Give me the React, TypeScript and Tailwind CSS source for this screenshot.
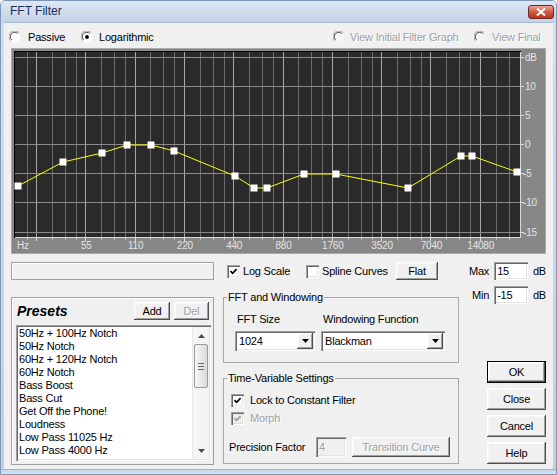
import React from "react";

const RAISED =
  "shadow-[inset_-1px_-1px_0_#505050,inset_1px_1px_0_#ffffff,inset_-2px_-2px_0_#a0a0a0,inset_2px_2px_0_#f8f8f8]";
const SUNKEN =
  "shadow-[inset_1px_1px_0_#a0a0a0,inset_2px_2px_0_#696969,inset_-1px_-1px_0_#ffffff,inset_-2px_-2px_0_#e3e3e3]";
const DIS = "text-[#a0a0a0] [text-shadow:1px_1px_0_#ffffff]";

const PRESETS = [
  "50Hz + 100Hz Notch",
  "50Hz Notch",
  "60Hz + 120Hz Notch",
  "60Hz Notch",
  "Bass Boost",
  "Bass Cut",
  "Get Off the Phone!",
  "Loudness",
  "Low Pass 11025 Hz",
  "Low Pass 4000 Hz",
  "Low Pass 5512 Hz",
];

const POINTS: [number, number][] = [
  [17, 186],
  [62, 162],
  [101, 153],
  [126, 145],
  [150, 145],
  [173, 151],
  [234, 176],
  [253, 188],
  [266, 188],
  [303, 174],
  [335, 174],
  [407, 188],
  [460, 156],
  [471, 156],
  [516, 172],
];

const DB: { y: number; label: string }[] = [
  { y: 57, label: "dB" },
  { y: 86, label: "10" },
  { y: 115, label: "5" },
  { y: 144, label: "0" },
  { y: 173, label: "-5" },
  { y: 202, label: "-10" },
  { y: 232, label: "-15" },
];

const xf = (f: number) => 35 + 49.3 * Math.log2(f / 27.5);

function Radio(props: { checked?: boolean; disabled?: boolean }) {
  return (
    <svg width="12" height="12" viewBox="0 0 12 12" className="shrink-0">
      <circle cx="6" cy="6" r="5.5" fill={props.disabled ? "#f4f4f4" : "#ffffff"} />
      <path d="M1.6 9.8 A5.3 5.3 0 0 1 9.8 1.6" fill="none" stroke="#9a9a9a" strokeWidth="1" />
      <path d="M2.6 8.9 A4.2 4.2 0 0 1 8.9 2.6" fill="none" stroke="#505050" strokeWidth="1" />
      {props.checked && <circle cx="6" cy="6" r="1.9" fill="#000000" />}
    </svg>
  );
}

function Check(props: { checked?: boolean; disabled?: boolean }) {
  return (
    <span
      className={`flex h-[13px] w-[13px] shrink-0 items-center justify-center ${
        props.disabled ? "bg-[#ececec]" : "bg-white"
      } ${SUNKEN}`}
    >
      {props.checked && (
        <svg width="9" height="9" viewBox="0 0 9 9">
          <path
            d="M1.5 4.2 L3.6 6.3 L7.6 2.2"
            fill="none"
            stroke={props.disabled ? "#a0a0a0" : "#000000"}
            strokeWidth="1.7"
          />
        </svg>
      )}
    </span>
  );
}

function Btn(props: {
  children: React.ReactNode;
  className?: string;
  disabled?: boolean;
  def?: boolean;
}) {
  return (
    <div
      className={`flex items-center justify-center bg-[#f0f0f0] ${RAISED} ${
        props.disabled ? DIS : "text-black"
      } ${props.def ? "border border-black" : ""} ${props.className ?? ""}`}
    >
      {props.children}
    </div>
  );
}

function Combo(props: { value: string; className?: string }) {
  return (
    <div className={`flex h-[20px] bg-white p-[2px] ${SUNKEN} ${props.className ?? ""}`}>
      <span className="flex flex-1 items-center pl-[2px]">{props.value}</span>
      <span className={`flex w-[16px] items-center justify-center bg-[#f0f0f0] ${RAISED}`}>
        <svg width="7" height="4" viewBox="0 0 7 4">
          <path d="M0 0 H7 L3.5 4 Z" fill="#000000" />
        </svg>
      </span>
    </div>
  );
}

function Graph() {
  const vlines: { x: number; major: boolean }[] = [];
  for (let k = -1; k <= 10; k++) {
    const b = 27.5 * 2 ** k;
    [1, 1.25, 1.5, 1.75].forEach((m, i) => {
      const x = xf(b * m);
      if (x > 15 && x < 518) vlines.push({ x: Math.round(x) + 0.5, major: i === 0 });
    });
  }
  const octaves = [55, 110, 220, 440, 880, 1760, 3520, 7040, 14080];
  const font = '"Liberation Sans", Arial, sans-serif';

  return (
    <svg width="535" height="206" viewBox="10 48 535 206" className="block">
      <rect x="10.5" y="48.5" width="534" height="205" fill="#878787" stroke="#a9a9a9" />
      <rect x="14" y="52" width="505" height="185" fill="#2a2a2a" />
      {vlines.map((v) => (
        <line
          key={v.x}
          x1={v.x}
          x2={v.x}
          y1="52"
          y2="237"
          stroke={v.major ? "#a8a8a8" : "#6c6c6c"}
        />
      ))}
      {DB.map((d) => (
        <line key={d.y} x1="14" x2="519" y1={d.y + 0.5} y2={d.y + 0.5} stroke="#8a8a8a" />
      ))}
      <line x1="13.5" x2="13.5" y1="51" y2="238" stroke="#000000" />
      <line x1="13" x2="520" y1="51.5" y2="51.5" stroke="#000000" />
      <line x1="519.5" x2="519.5" y1="52" y2="238" stroke="#d8d8d8" />
      <line x1="14" x2="520" y1="237.5" y2="237.5" stroke="#d8d8d8" />
      {vlines.map((v) => (
        <line
          key={"t" + v.x}
          x1={v.x}
          x2={v.x}
          y1="238"
          y2={v.major ? "241" : "239.5"}
          stroke="#d8d8d8"
        />
      ))}
      {DB.map((d) => (
        <line key={"d" + d.y} x1="520" x2="523" y1={d.y + 0.5} y2={d.y + 0.5} stroke="#d8d8d8" />
      ))}
      {DB.map((d) => (
        <text
          key={"l" + d.y}
          x={d.label.startsWith("-") ? 522 : 524}
          y={d.y + 4}
          fontSize="10"
          fontFamily={font}
          fill="#e4e4e4"
        >
          {d.label}
        </text>
      ))}
      <text x="16" y="249" fontSize="10" fontFamily={font} fill="#e4e4e4">
        Hz
      </text>
      {octaves.map((f) => (
        <text
          key={f}
          x={xf(f) + 1}
          y="249"
          fontSize="10"
          fontFamily={font}
          fill="#e4e4e4"
          textAnchor="middle"
        >
          {f}
        </text>
      ))}
      <polyline
        points={POINTS.map((p) => p.join(",")).join(" ")}
        fill="none"
        stroke="#ffff00"
        strokeWidth="1"
      />
      {POINTS.map((p, i) => (
        <rect key={i} x={p[0] - 3.5} y={p[1] - 3.5} width="7" height="7" fill="#ffffff" />
      ))}
    </svg>
  );
}

export default function App() {
  return (
    <div className="flex h-[475px] w-[557px] flex-col overflow-hidden rounded-t-[5px] border border-[#7f97b8] bg-[linear-gradient(#d3deec,#bfd0e5)] font-['Liberation_Sans',Arial,sans-serif] text-[11px] leading-[13px] tracking-[-0.2px] text-black">
      {/* title bar */}
      <div className="flex h-[21px] shrink-0 items-center bg-[linear-gradient(#dde7f3,#c3d3e7)] pl-[9px]">
        <span className="flex-1 text-[12px] tracking-normal text-[#1c2d58]">FFT Filter</span>
        <div className="mr-[2px] flex h-[14px] w-[26px] items-center justify-center rounded-[3px] border border-[#6d2a1e] bg-[linear-gradient(#eba696,#cf5a44_50%,#b8341f)]">
          <svg width="10" height="8" viewBox="0 0 10 8">
            <path d="M1 0.5 L9 7.5 M9 0.5 L1 7.5" stroke="#ffffff" strokeWidth="2" />
          </svg>
        </div>
      </div>

      {/* dialog body */}
      <div className="mx-[3px] flex h-[447px] shrink-0 flex-col border-t border-[#a9bbd2] bg-[#f0f0f0]">
        <div className="mt-[7px] flex h-[14px] items-center pl-[5px]">
          <div className="flex w-[72px] items-center">
            <Radio />
            <span className="ml-[7px]">Passive</span>
          </div>
          <div className="flex w-[252px] items-center">
            <Radio checked />
            <span className="ml-[6px]">Logarithmic</span>
          </div>
          <div className={`flex w-[141px] items-center ${DIS}`}>
            <Radio disabled />
            <span className="ml-[5px]">View Initial Filter Graph</span>
          </div>
          <div className={`flex items-center ${DIS}`}>
            <Radio disabled />
            <span className="ml-[6px]">View Final</span>
          </div>
        </div>

        <div className="ml-[7px] mt-[4px]">
          <Graph />
        </div>

        <div className="ml-[7px] mt-[8px] flex">
          {/* left column */}
          <div className="flex w-[203px] flex-col">
            <div className="h-[18px] border border-[#a0a0a0] shadow-[inset_1px_1px_0_#ffffff]" />
            <div className="mt-[17px] flex h-[168px] flex-col border border-[#a0a0a0] px-[4px] pt-[4px] shadow-[inset_1px_1px_0_#ffffff]">
              <div className="flex h-[18px] items-center">
                <span className="ml-[1px] flex-1 text-[14px] font-bold italic tracking-normal">Presets</span>
                <Btn className="h-[18px] w-[36px]">Add</Btn>
                <Btn className="ml-[4px] h-[18px] w-[35px]" disabled>
                  Del
                </Btn>
              </div>
              <div className={`mt-[5px] flex h-[136px] w-[195px] bg-white p-[2px] ${SUNKEN}`}>
                <div className="flex-1 overflow-hidden pl-[1px]">
                  {PRESETS.map((p) => (
                    <div key={p} className="h-[13px] whitespace-nowrap leading-[13px]">
                      {p}
                    </div>
                  ))}
                </div>
                <div className="flex w-[17px] flex-col border-l border-[#e8e8e8] bg-[#f5f5f5]">
                  <div className="flex h-[17px] items-center justify-center">
                    <svg width="7" height="4" viewBox="0 0 7 4">
                      <path d="M0 4 H7 L3.5 0 Z" fill="#4d4d4d" />
                    </svg>
                  </div>
                  <div className="mx-[1px] flex h-[44px] flex-col items-center justify-center gap-[2px] rounded-[2px] border border-[#9b9b9b] bg-[linear-gradient(90deg,#f6f6f6,#dadada)]">
                    <span className="h-[1px] w-[6px] bg-[#6b6b6b]" />
                    <span className="h-[1px] w-[6px] bg-[#6b6b6b]" />
                    <span className="h-[1px] w-[6px] bg-[#6b6b6b]" />
                  </div>
                  <div className="flex-1" />
                  <div className="flex h-[17px] items-center justify-center">
                    <svg width="7" height="4" viewBox="0 0 7 4">
                      <path d="M0 0 H7 L3.5 4 Z" fill="#4d4d4d" />
                    </svg>
                  </div>
                </div>
              </div>
            </div>
          </div>

          {/* middle column */}
          <div className="ml-[9px] flex w-[236px] flex-col">
            <div className="flex h-[18px] items-center">
              <div className="ml-[4px] flex w-[79px] items-center">
                <Check checked />
                <span className="ml-[3px]">Log Scale</span>
              </div>
              <div className="flex w-[90px] items-center">
                <Check />
                <span className="ml-[3px]">Spline Curves</span>
              </div>
              <Btn className="h-[18px] w-[42px]">Flat</Btn>
            </div>

            <fieldset className="mt-[11px] h-[72px] border border-[#a8a8a8]">
              <legend className="ml-[3px] px-[1px] leading-[13px]">FFT and Windowing</legend>
              <div className="mt-[9px] flex pl-[11px]">
                <div className="flex w-[80px] flex-col">
                  <span className="ml-[2px] h-[13px]">FFT Size</span>
                  <Combo value="1024" className="mt-[5px]" />
                </div>
                <div className="ml-[6px] flex w-[124px] flex-col">
                  <span className="ml-[2px] h-[13px]">Windowing Function</span>
                  <Combo value="Blackman" className="mt-[5px]" />
                </div>
              </div>
            </fieldset>

            <fieldset className="mt-[9px] h-[92px] border border-[#a8a8a8]">
              <legend className="ml-[3px] px-[1px] leading-[13px]">Time-Variable Settings</legend>
              <div className="mt-[8px] flex h-[14px] items-center pl-[7px]">
                <Check checked />
                <span className="ml-[6px]">Lock to Constant Filter</span>
              </div>
              <div className="mt-[4px] flex h-[14px] items-center pl-[7px]">
                <Check checked disabled />
                <span className={`ml-[6px] ${DIS}`}>Morph</span>
              </div>
              <div className="mt-[12px] flex h-[20px] items-center pl-[5px]">
                <span className="w-[87px]">Precision Factor</span>
                <div className={`flex h-[20px] w-[30px] items-center bg-[#f0f0f0] pl-[3px] ${SUNKEN} ${DIS}`}>
                  4
                </div>
                <Btn className="ml-[6px] h-[20px] w-[98px]" disabled>
                  Transition Curve
                </Btn>
              </div>
            </fieldset>
          </div>

          {/* right column */}
          <div className="ml-[8px] flex w-[79px] flex-col">
            <div className="flex h-[18px] items-center">
              <span className="w-[28px] pr-[5px] text-right">Max</span>
              <div className={`flex h-[18px] w-[35px] items-center bg-white pl-[3px] ${SUNKEN}`}>15</div>
              <span className="ml-[5px]">dB</span>
            </div>
            <div className="mt-[6px] flex h-[18px] items-center">
              <span className="w-[28px] pr-[5px] text-right">Min</span>
              <div className={`flex h-[18px] w-[35px] items-center bg-white pl-[3px] ${SUNKEN}`}>-15</div>
              <span className="ml-[5px]">dB</span>
            </div>
            <div className="ml-[20px] mt-[57px] flex w-[59px] flex-col gap-[5px]">
              <Btn className="h-[22px]" def>
                OK
              </Btn>
              <Btn className="h-[22px]">Close</Btn>
              <Btn className="h-[22px]">Cancel</Btn>
              <Btn className="h-[22px]">Help</Btn>
            </div>
          </div>
        </div>
      </div>

      {/* bottom frame */}
      <div className="flex-1 border-t border-[#9fb3cc] bg-[linear-gradient(#c6d6ea,#d6e2f1)]" />
    </div>
  );
}
